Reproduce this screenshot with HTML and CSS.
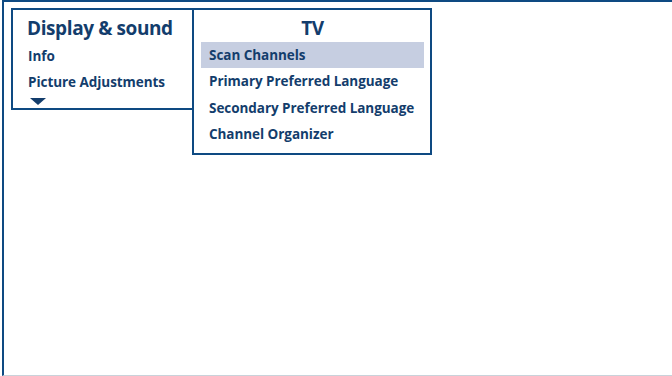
FILE: index.html
```html
<!DOCTYPE html>
<html lang="en">
<head>
    <meta charset="UTF-8">
    <title>Menu</title>
    <link rel="stylesheet" href="styles.css">
</head>
<body>
    <div class="screen">
        <div class="menus">
            <div class="panel side">
                <div class="title">Display &amp; sound</div>
                <div class="item">Info</div>
                <div class="item">Picture Adjustments</div>
                <div class="more"></div>
            </div>
            <div class="panel tv">
                <div class="title center">TV</div>
                <div class="item selected">Scan Channels</div>
                <div class="item">Primary Preferred Language</div>
                <div class="item">Secondary Preferred Language</div>
                <div class="item">Channel Organizer</div>
            </div>
        </div>
    </div>
</body>
</html>
```

FILE: styles.css
```css
body {
    margin: 0;
    background: #fff;
    font-family: "Open Sans", "Liberation Sans", sans-serif;
    color: #133d6c;
}

.screen {
    box-sizing: border-box;
    margin-left: 2px;
    height: 376px;
    border-top: 2px solid #0e4a82;
    border-left: 2px solid #0e4a82;
    border-bottom: 1px solid #c9d2da;
    padding: 6px 0 0 7px;
}

.menus {
    display: flex;
    align-items: flex-start;
}

.panel {
    border: 2px solid #0e4a82;
    box-sizing: border-box;
}

.side {
    width: 183px;
    height: 102px;
    padding: 6px 0 0 14px;
    margin-right: -2px;
}

.tv {
    width: 240px;
    height: 147px;
    padding: 6px 6px 0 7px;
}

.title {
    font-size: 19px;
    font-weight: 700;
    line-height: 24px;
    letter-spacing: -0.4px;
}

.center {
    text-align: center;
}

.item {
    font-size: 13.5px;
    font-weight: 700;
    line-height: 26px;
    letter-spacing: -0.05px;
    padding-left: 1px;
}

.tv .item {
    padding-left: 8px;
    line-height: 26.4px;
}

.tv .title {
    margin-bottom: 2px;
}

.side .title {
    margin-bottom: 3px;
}

.item.selected {
    background: #c6cee1;
}

.more {
    width: 0;
    height: 0;
    margin: 3px 0 0 3px;
    border-left: 8px solid transparent;
    border-right: 8px solid transparent;
    border-top: 7px solid #133d6c;
}
```
